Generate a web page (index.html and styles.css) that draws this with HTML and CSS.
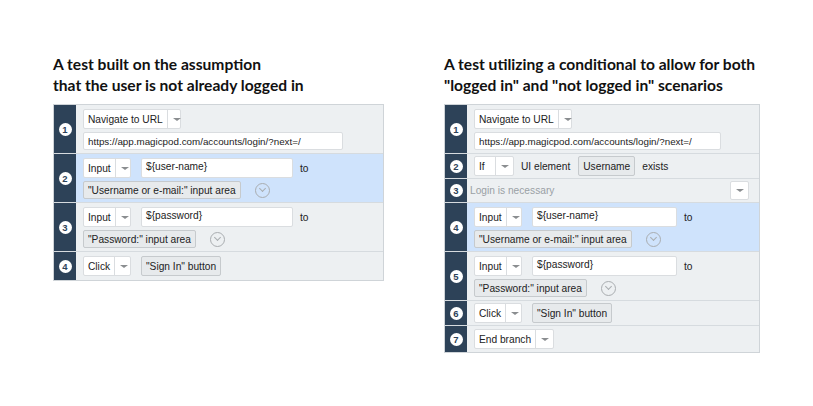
FILE: index.html
```html
<!DOCTYPE html>
<html>
<head>
<meta charset="utf-8">
<link rel="stylesheet" href="styles.css">
</head>
<body>
<div class="page">
  <section class="col col-left">
    <h2 class="title">A test built on the assumption<br>that the user is not already logged in</h2>
    <div class="panel">
      <div class="row r2l">
        <div class="num"><span class="dot">1</span></div>
        <div class="body">
          <div class="line"><span class="dd w-nav"><span class="dd-t">Navigate to URL</span><span class="dd-a"></span></span></div>
          <div class="line"><span class="url w-url-l">https://app.magicpod.com/accounts/login/?next=/</span></div>
        </div>
      </div>
      <div class="row r2l blue">
        <div class="num"><span class="dot">2</span></div>
        <div class="body">
          <div class="line"><span class="dd w-in"><span class="dd-t">Input</span><span class="dd-a"></span></span><span class="txt w-txt-l">${user-name}</span><span class="lbl">to</span></div>
          <div class="line"><span class="chip">"Username or e-mail:" input area</span><span class="cchev"></span></div>
        </div>
      </div>
      <div class="row r2l">
        <div class="num"><span class="dot">3</span></div>
        <div class="body">
          <div class="line"><span class="dd w-in"><span class="dd-t">Input</span><span class="dd-a"></span></span><span class="txt w-txt-l">${password}</span><span class="lbl">to</span></div>
          <div class="line"><span class="chip">"Password:" input area</span><span class="cchev"></span></div>
        </div>
      </div>
      <div class="row r1 last">
        <div class="num"><span class="dot">4</span></div>
        <div class="body">
          <div class="line"><span class="dd w-in"><span class="dd-t">Click</span><span class="dd-a"></span></span><span class="chip tall gapl">"Sign In" button</span></div>
        </div>
      </div>
    </div>
  </section>

  <section class="col col-right">
    <h2 class="title">A test utilizing a conditional to allow for both<br>"logged in" and "not logged in" scenarios</h2>
    <div class="panel">
      <div class="row r2l">
        <div class="num"><span class="dot">1</span></div>
        <div class="body">
          <div class="line"><span class="dd w-nav"><span class="dd-t">Navigate to URL</span><span class="dd-a"></span></span></div>
          <div class="line"><span class="url w-url-r">https://app.magicpod.com/accounts/login/?next=/</span></div>
        </div>
      </div>
      <div class="row r1s">
        <div class="num"><span class="dot">2</span></div>
        <div class="body">
          <div class="line"><span class="dd w-if"><span class="dd-t">If</span><span class="dd-a"></span></span><span class="lbl">UI element</span><span class="chip tall">Username</span><span class="lbl">exists</span></div>
        </div>
      </div>
      <div class="row r1s">
        <div class="num"><span class="dot">3</span></div>
        <div class="body comment">
          <span class="ctext">Login is necessary</span>
          <span class="abox"><span class="dd-a"></span></span>
        </div>
      </div>
      <div class="row r2l blue">
        <div class="num"><span class="dot">4</span></div>
        <div class="body">
          <div class="line"><span class="dd w-in"><span class="dd-t">Input</span><span class="dd-a"></span></span><span class="txt w-txt-r">${user-name}</span><span class="lbl">to</span></div>
          <div class="line"><span class="chip">"Username or e-mail:" input area</span><span class="cchev"></span></div>
        </div>
      </div>
      <div class="row r2l">
        <div class="num"><span class="dot">5</span></div>
        <div class="body">
          <div class="line"><span class="dd w-in"><span class="dd-t">Input</span><span class="dd-a"></span></span><span class="txt w-txt-r">${password}</span><span class="lbl">to</span></div>
          <div class="line"><span class="chip">"Password:" input area</span><span class="cchev"></span></div>
        </div>
      </div>
      <div class="row r1s">
        <div class="num"><span class="dot">6</span></div>
        <div class="body">
          <div class="line"><span class="dd w-in"><span class="dd-t">Click</span><span class="dd-a"></span></span><span class="chip tall gapl">"Sign In" button</span></div>
        </div>
      </div>
      <div class="row r1 last short">
        <div class="num"><span class="dot">7</span></div>
        <div class="body">
          <div class="line"><span class="dd"><span class="dd-t">End branch</span><span class="dd-a"></span></span></div>
        </div>
      </div>
    </div>
  </section>
</div>
</body>
</html>
```

FILE: styles.css
```css
* { box-sizing: border-box; }
html, body { margin: 0; padding: 0; background: #ffffff; }
body { font-family: "Liberation Sans", Arial, sans-serif; color: #222; }

.page {
  display: flex;
  align-items: flex-start;
  gap: 60px;
  padding: 54px 0 0 53px;
}
.col-left { width: 331px; }
.col-right { width: 316px; }

.title {
  font-family: Lato, "Open Sans", sans-serif;
  font-weight: 700;
  font-size: 15.6px;
  line-height: 21px;
  margin: 0 0 8px 0;
  color: #111;
  white-space: nowrap;
}

.panel {
  border: 1px solid #cfd4d8;
  background: #edf0f2;
}

.row {
  display: flex;
  border-bottom: 1px solid #d6dbdf;
}
.row.last { border-bottom: none; }
.row.blue { background: #cfe3fc; }

.num {
  width: 22px;
  flex: none;
  background: #2d4258;
  display: flex;
  align-items: center;
  justify-content: center;
}
.dot {
  width: 13px;
  height: 13px;
  border-radius: 50%;
  background: #ffffff;
  color: #2d4258;
  font-size: 9.5px;
  font-weight: 700;
  line-height: 13px;
  text-align: center;
}

.body {
  flex: 1;
  display: flex;
  flex-direction: column;
  gap: 3px;
  padding: 4px 6px 3px 7px;
}
.r1 .body { padding-top: 4px; padding-bottom: 4px; }
.r1.short .body { padding-top: 3px; padding-bottom: 3px; }
.r1s .body { padding-top: 2px; padding-bottom: 2px; }

.line {
  display: flex;
  align-items: center;
  gap: 8px;
  font-size: 10px;
}

.dd {
  display: inline-flex;
  height: 20px;
  background: #fff;
  border: 1px solid #dadde0;
  border-radius: 2px;
  white-space: nowrap;
}
.dd-t {
  display: flex;
  align-items: center;
  padding: 0 4px;
  font-size: 10.2px;
  color: #222;
  flex: 1;
}
.dd-a {
  width: 18px;
  flex: none;
  border-left: 1px solid #dadde0;
  position: relative;
}
.dd-a::after {
  content: "";
  position: absolute;
  left: 5px;
  top: 8px;
  border-left: 4px solid transparent;
  border-right: 4px solid transparent;
  border-top: 3px solid #8a8d90;
}
.w-nav { width: 98px; }
.w-in { width: 48px; }
.w-if { width: 40px; }

.url {
  display: flex;
  align-items: center;
  height: 18px;
  background: #fff;
  border: 1px solid #dadde0;
  border-radius: 2px;
  padding: 0 4px;
  font-size: 9.8px;
  white-space: nowrap;
}
.w-url-l { width: 260px; }
.w-url-r { width: 247px; }

.txt {
  height: 20px;
  background: #fff;
  border: 1px solid #dadde0;
  border-radius: 2px;
  padding: 2px 4px 0;
  font-size: 10.2px;
  margin-left: 2px;
}
.w-txt-l { width: 152px; }
.w-txt-r { width: 145px; }

.lbl { font-size: 10.2px; color: #222; margin-left: -1px; white-space: nowrap; }

.chip {
  display: inline-flex;
  align-items: center;
  height: 18px;
  padding: 0 4px;
  background: #e7eaec;
  border: 1px solid #c6cacd;
  border-radius: 2px;
  font-size: 10.2px;
  color: #222;
  white-space: nowrap;
}
.chip.tall { height: 20px; }
.gapl { margin-left: 2px; }

.cchev {
  width: 15px;
  height: 15px;
  border: 1px solid #a9adb0;
  border-radius: 50%;
  margin-left: 6px;
  position: relative;
}
.cchev::after {
  content: "";
  position: absolute;
  left: 4px;
  top: 2.5px;
  width: 4px;
  height: 4px;
  border-right: 1px solid #a9adb0;
  border-bottom: 1px solid #a9adb0;
  transform: rotate(45deg);
}

.comment {
  flex-direction: row;
  align-items: center;
  justify-content: space-between;
  padding-left: 3px;
  padding-right: 10px;
}
.ctext { font-size: 10.2px; color: #9aa0a5; }
.abox {
  display: flex;
  width: 19px;
  height: 19px;
  background: #fff;
  border: 1px solid #dadde0;
  border-radius: 2px;
}
.abox .dd-a { border-left: none; }
.abox .dd-a::after { left: 5px; top: 7px; }
```
